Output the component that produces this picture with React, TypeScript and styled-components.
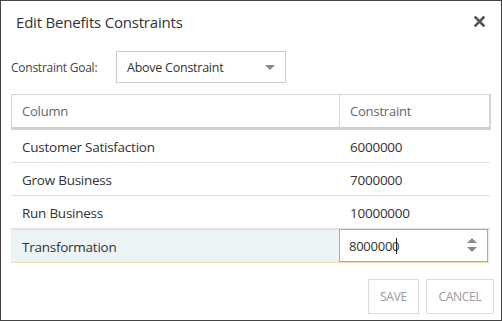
import React from "react";
import styled, { createGlobalStyle } from "styled-components";

const Global = createGlobalStyle`
  html, body { margin: 0; padding: 0; background: #fff; }
  * { box-sizing: border-box; }
  body { font-family: "Open Sans", "Noto Sans", sans-serif; }
`;

const Dialog = styled.div`
  width: 502px;
  height: 321px;
  border: 1px solid #444;
  background: #fff;
  padding: 0 11px 0 10px;
  display: flex;
  flex-direction: column;
`;

const Header = styled.div`
  height: 41px;
  display: flex;
  align-items: center;
  justify-content: space-between;
  padding: 0 5px 0 5px;
`;

const Title = styled.div`
  font-size: 15px;
  color: #333;
  letter-spacing: -0.2px;
`;

const Close = styled.button`
  border: none;
  background: none;
  padding: 0;
  width: 11px;
  height: 11px;
  display: flex;
  cursor: pointer;
`;

const GoalRow = styled.div`
  margin-top: 9px;
  display: flex;
  align-items: center;
  height: 32px;
`;

const Label = styled.label`
  width: 105px;
  font-size: 12px;
  color: #444;
  letter-spacing: -0.25px;
`;

const Select = styled.div`
  width: 170px;
  height: 32px;
  border: 1px solid #ccc;
  display: flex;
  align-items: center;
  justify-content: space-between;
  padding: 0 10px 0 10px;
  font-size: 12.5px;
  color: #333;
  letter-spacing: -0.25px;
`;

const Caret = styled.span`
  width: 0;
  height: 0;
  border-left: 5px solid transparent;
  border-right: 5px solid transparent;
  border-top: 5px solid #888;
`;

const Table = styled.div`
  margin-top: 11px;
  width: 480px;
`;

const HeadRow = styled.div`
  display: grid;
  grid-template-columns: 328px 1fr;
  height: 36px;
  border: 1px solid #d4d4d4;
  border-right-width: 2px;
  border-bottom: 3px solid #cfcfcf;
`;

const HeadCell = styled.div<{ $divider?: boolean }>`
  display: flex;
  align-items: center;
  padding-left: 10px;
  font-size: 13px;
  color: #666;
  letter-spacing: -0.2px;
  border-right: ${(p) => (p.$divider ? "1px solid #d8d8d8" : "none")};
`;

const Row = styled.div<{ $active?: boolean }>`
  display: grid;
  grid-template-columns: 328px 1fr;
  width: 479px;
  height: ${(p) => (p.$active ? "34px" : "33px")};
  background: ${(p) => (p.$active ? "#ebf3f5" : "#fff")};
  border-bottom: 1px solid ${(p) => (p.$active ? "#efdfae" : "#e3e3e3")};
  border-top: ${(p) => (p.$active ? "1px solid #efdfae" : "none")};
`;

const Cell = styled.div`
  display: flex;
  align-items: center;
  padding-left: 11px;
  padding-top: 1px;
  font-size: 13.5px;
  color: #333;
  letter-spacing: -0.25px;
`;

const InputWrap = styled.div`
  position: relative;
  height: 33px;
  margin-top: -1px;
  width: 149px;
  border: 1px solid #86b0de;
  background: #fff;
  display: flex;
  align-items: center;
  padding-left: 9px;
`;

const NumInput = styled.input`
  border: none;
  outline: none;
  font: inherit;
  font-size: 13px;
  color: #333;
  letter-spacing: -0.25px;
  width: 100px;
  padding: 0;
  background: transparent;
  caret-color: #000;
`;

const Cursor = styled.span`
  position: absolute;
  left: 56px;
  top: 8px;
  width: 1px;
  height: 16px;
  background: #222;
`;

const Spinner = styled.div`
  position: absolute;
  right: 10px;
  top: 8px;
  display: flex;
  flex-direction: column;
  gap: 4px;
`;

const Up = styled.span`
  width: 0;
  height: 0;
  border-left: 5px solid transparent;
  border-right: 5px solid transparent;
  border-bottom: 5px solid #8a8a8a;
`;

const Down = styled.span`
  width: 0;
  height: 0;
  border-left: 5px solid transparent;
  border-right: 5px solid transparent;
  border-top: 5px solid #8a8a8a;
`;

const Footer = styled.div`
  margin-top: 16px;
  display: flex;
  justify-content: flex-end;
  gap: 7px;
  margin-right: -4px;
`;

const Button = styled.button<{ $w: number }>`
  width: ${(p) => p.$w}px;
  height: 35px;
  border: 1px solid #dcdcdc;
  background: #fff;
  color: #9a9a9a;
  font-family: "Open Sans", "Noto Sans", sans-serif;
  font-size: 12px;
  letter-spacing: -0.3px;
  text-transform: uppercase;
  padding: 0;
`;

const rows = [
  ["Customer Satisfaction", "6000000"],
  ["Grow Business", "7000000"],
  ["Run Business", "10000000"],
];

export default function App() {
  return (
    <>
      <Global />
      <Dialog>
        <Header>
          <Title>Edit Benefits Constraints</Title>
          <Close aria-label="close">
            <svg width="11" height="11" viewBox="0 0 11 11">
              <path d="M1.5 1.5 L9.5 9.5 M9.5 1.5 L1.5 9.5" stroke="#555" strokeWidth="2.6" strokeLinecap="square" />
            </svg>
          </Close>
        </Header>
        <GoalRow>
          <Label>Constraint Goal:</Label>
          <Select>
            <span>Above Constraint</span>
            <Caret />
          </Select>
        </GoalRow>
        <Table>
          <HeadRow>
            <HeadCell $divider>Column</HeadCell>
            <HeadCell>Constraint</HeadCell>
          </HeadRow>
          {rows.map(([name, val]) => (
            <Row key={name}>
              <Cell>{name}</Cell>
              <Cell>{val}</Cell>
            </Row>
          ))}
          <Row $active>
            <Cell>Transformation</Cell>
            <InputWrap>
              <NumInput defaultValue="8000000" />
              <Cursor />
              <Spinner>
                <Up />
                <Down />
              </Spinner>
            </InputWrap>
          </Row>
        </Table>
        <Footer>
          <Button $w={51}>Save</Button>
          <Button $w={68}>Cancel</Button>
        </Footer>
      </Dialog>
    </>
  );
}
